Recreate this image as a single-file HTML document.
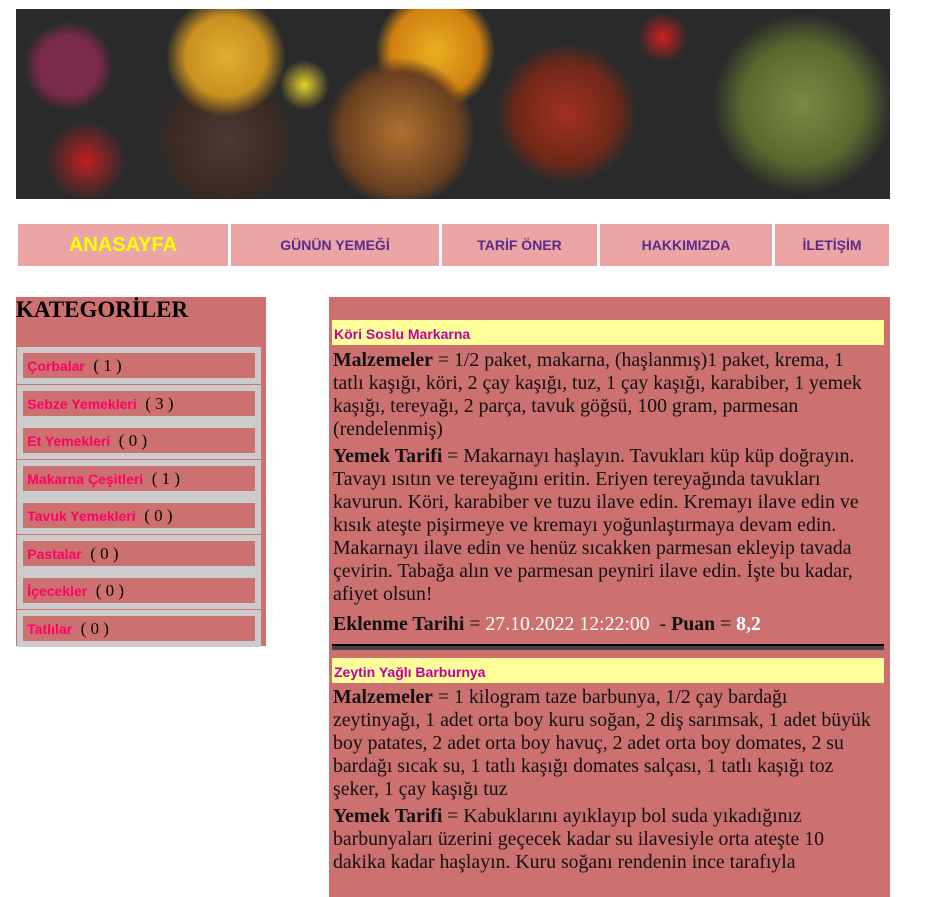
<!DOCTYPE html>
<html><head><meta charset="utf-8"><style>
body{margin:0;background:#fff;width:944px;height:868px;overflow:hidden;position:relative;font-family:"Liberation Serif",serif;}
.banner{position:absolute;left:16px;top:9px;width:874px;height:190px;background:
radial-gradient(circle at 6% 30%,#7a2a4a 0,#7a2a4a 30px,transparent 45px),
radial-gradient(circle at 24% 25%,#e0b030 0,#c89020 40px,transparent 60px),
radial-gradient(circle at 24% 70%,#4a3a30 0,#3a2a22 55px,transparent 70px),
radial-gradient(circle at 33% 40%,#e8d030 0,transparent 25px),
radial-gradient(circle at 44% 65%,#b07030 0,#6a4020 60px,transparent 75px),
radial-gradient(circle at 48% 22%,#e8b020 0,#d08010 45px,transparent 60px),
radial-gradient(circle at 63% 55%,#a03020 0,#702818 50px,transparent 70px),
radial-gradient(circle at 74% 15%,#d02020 0,transparent 25px),
radial-gradient(circle at 90% 50%,#7a8a40 0,#5a6a30 60px,transparent 90px),
radial-gradient(circle at 8% 80%,#c02020 0,transparent 40px),
#2a2a2a;}
.nav{position:absolute;top:224px;height:42px;background:#eba5a5;display:flex;align-items:center;justify-content:center;font-family:"Liberation Sans",sans-serif;font-weight:bold;color:#5a2a8a;font-size:14px;}
.side{position:absolute;left:16px;top:297px;width:250px;height:349px;background:#cc7070;}
.side h2{margin:0;font-size:23px;font-weight:bold;line-height:26px;}
.cat{position:absolute;left:1px;width:232px;height:25px;border:6px solid #cccccc;background:#cc7070;font-size:17px;line-height:25px;}
.cat b{font-family:"Liberation Sans",sans-serif;color:#ff0066;font-size:14px;}
.main{position:absolute;left:329px;top:297px;width:561px;height:600px;background:#cc7070;font-size:19.8px;line-height:23px;color:#111;}
.title{position:absolute;left:3px;width:552px;height:25px;background:#ffff99;color:#c000a0;font-family:"Liberation Sans",sans-serif;font-weight:bold;font-size:14px;line-height:28px;padding-left:2px;box-sizing:border-box;}
.p{position:absolute;left:4px;width:556px;white-space:nowrap;overflow:hidden;}
.w{color:#fff}
</style></head><body>
<div class="banner"></div>
<div class="nav" style="left:18px;width:210px;color:#ffff00;font-size:20px">ANASAYFA</div>
<div class="nav" style="left:231px;width:208px">GÜNÜN YEMEĞİ</div>
<div class="nav" style="left:442px;width:155px">TARİF ÖNER</div>
<div class="nav" style="left:600px;width:172px">HAKKIMIZDA</div>
<div class="nav" style="left:775px;width:114px">İLETİŞİM</div>
<div class="side"><h2>KATEGORİLER</h2>
<div class="cat" style="top:50px">&nbsp;<b>Çorbalar</b>&nbsp; ( 1 )</div>
<div class="cat" style="top:88px">&nbsp;<b>Sebze Yemekleri</b>&nbsp; ( 3 )</div>
<div class="cat" style="top:125px">&nbsp;<b>Et Yemekleri</b>&nbsp; ( 0 )</div>
<div class="cat" style="top:163px">&nbsp;<b>Makarna Çeşitleri</b>&nbsp; ( 1 )</div>
<div class="cat" style="top:200px">&nbsp;<b>Tavuk Yemekleri</b>&nbsp; ( 0 )</div>
<div class="cat" style="top:238px">&nbsp;<b>Pastalar</b>&nbsp; ( 0 )</div>
<div class="cat" style="top:275px">&nbsp;<b>İçecekler</b>&nbsp; ( 0 )</div>
<div class="cat" style="top:313px">&nbsp;<b>Tatlılar</b>&nbsp; ( 0 )</div>
</div>
<div class="main">
<div class="title" style="top:23px">Köri Soslu Markarna</div>
<div class="p" style="top:52px"><b>Malzemeler</b> = 1/2 paket, makarna, (haşlanmış)1 paket, krema, 1<br>tatlı kaşığı, köri, 2 çay kaşığı, tuz, 1 çay kaşığı, karabiber, 1 yemek<br>kaşığı, tereyağı, 2 parça, tavuk göğsü, 100 gram, parmesan<br>(rendelenmiş)</div>
<div class="p" style="top:148px"><b>Yemek Tarifi</b> = Makarnayı haşlayın. Tavukları küp küp doğrayın.<br>Tavayı ısıtın ve tereyağını eritin. Eriyen tereyağında tavukları<br>kavurun. Köri, karabiber ve tuzu ilave edin. Kremayı ilave edin ve<br>kısık ateşte pişirmeye ve kremayı yoğunlaştırmaya devam edin.<br>Makarnayı ilave edin ve henüz sıcakken parmesan ekleyip tavada<br>çevirin. Tabağa alın ve parmesan peyniri ilave edin. İşte bu kadar,<br>afiyet olsun!</div>
<div class="p" style="top:316px"><b>Eklenme Tarihi</b> = <span class="w">27.10.2022 12:22:00</span>&nbsp; - <b>Puan</b> = <b class="w">8,2</b></div>
<div style="position:absolute;left:3px;top:347px;width:552px;height:6px;background:#444;border-top:2px solid #000;box-sizing:border-box"></div>
<div class="title" style="top:361px">Zeytin Yağlı Barburnya</div>
<div class="p" style="top:389px"><b>Malzemeler</b> = 1 kilogram taze barbunya, 1/2 çay bardağı<br>zeytinyağı, 1 adet orta boy kuru soğan, 2 diş sarımsak, 1 adet büyük<br>boy patates, 2 adet orta boy havuç, 2 adet orta boy domates, 2 su<br>bardağı sıcak su, 1 tatlı kaşığı domates salçası, 1 tatlı kaşığı toz<br>şeker, 1 çay kaşığı tuz</div>
<div class="p" style="top:508px"><b>Yemek Tarifi</b> = Kabuklarını ayıklayıp bol suda yıkadığınız<br>barbunyaları üzerini geçecek kadar su ilavesiyle orta ateşte 10<br>dakika kadar haşlayın. Kuru soğanı rendenin ince tarafıyla</div>
</div>
</body></html>
